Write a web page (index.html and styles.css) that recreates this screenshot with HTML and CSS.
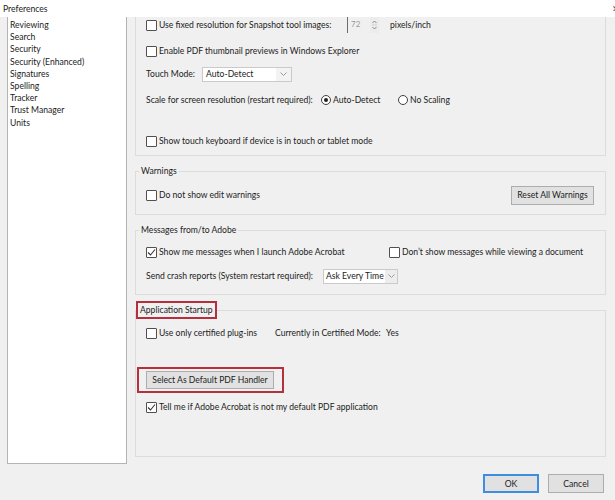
FILE: index.html
```html
<!DOCTYPE html>
<html lang="en">

<head>
    <meta charset="UTF-8">
    <meta name="viewport" content="width=device-width, initial-scale=1.0">
    <title>Preferences</title>

    <link rel="stylesheet" href="styles.css">
</head>

<body>
    <header class="titlebar">
        <span>Preferences</span>
        <span class="close">✕</span>
    </header>

    <div class="main">
        <ul class="categories">
            <li>Reviewing</li>
            <li>Search</li>
            <li>Security</li>
            <li>Security (Enhanced)</li>
            <li>Signatures</li>
            <li>Spelling</li>
            <li>Tracker</li>
            <li>Trust Manager</li>
            <li>Units</li>
        </ul>

        <div class="panel">
            <!-- top of this group is scrolled out of view -->
            <div class="group group-cut">
                <div class="row">
                    <label class="check w-snapshot"><span class="box"></span>Use fixed resolution for Snapshot tool images:</label>
                    <span class="spin">
                        <span class="spin-value">72</span>
                        <span class="spin-arrows">
                            <svg width="7" height="14" viewBox="0 0 7 14">
                                <path d="M1.5 5 L3.5 3 L5.5 5" fill="none" stroke="#8a8a8a" stroke-width="1" />
                                <path d="M1.5 9 L3.5 11 L5.5 9" fill="none" stroke="#8a8a8a" stroke-width="1" />
                                <line x1="1" y1="7" x2="6" y2="7" stroke="#d0d0d0" />
                            </svg>
                        </span>
                    </span>
                    <span class="unit">pixels/inch</span>
                </div>

                <div class="row gap-10">
                    <label class="check"><span class="box"></span>Enable PDF thumbnail previews in Windows Explorer</label>
                </div>

                <div class="row gap-7">
                    <span class="w-touch">Touch Mode:</span>
                    <span class="select select-touch">
                        <span class="select-value">Auto-Detect</span>
                        <span class="select-arrow">
                            <svg width="7" height="4" viewBox="0 0 7 4"><path d="M0.5 0.5 L3.5 3.5 L6.5 0.5" fill="none" stroke="#9a9a9a" /></svg>
                        </span>
                    </span>
                </div>

                <div class="row gap-10">
                    <span class="w-scale">Scale for screen resolution (restart required):</span>
                    <label class="radio w-auto"><span class="dot on"></span>Auto-Detect</label>
                    <label class="radio"><span class="dot"></span>No Scaling</label>
                </div>

                <div class="row gap-25">
                    <label class="check"><span class="box"></span>Show touch keyboard if device is in touch or tablet mode</label>
                </div>
            </div>

            <fieldset class="group group-warnings">
                <legend>Warnings</legend>
                <div class="row row-tall">
                    <label class="check"><span class="box"></span>Do not show edit warnings</label>
                    <button class="btn btn-reset" type="button">Reset All Warnings</button>
                </div>
            </fieldset>

            <fieldset class="group group-messages">
                <legend>Messages from/to Adobe</legend>
                <div class="row">
                    <label class="check w-show"><span class="box checked"><svg width="9" height="9" viewBox="0 0 9 9"><path d="M1 4.5 L3.5 7 L8 1.5" fill="none" stroke="#333" stroke-width="1.1" /></svg></span>Show me messages when I launch Adobe Acrobat</label>
                    <label class="check"><span class="box"></span>Don’t show messages while viewing a document</label>
                </div>

                <div class="row gap-8">
                    <span class="w-crash">Send crash reports (System restart required):</span>
                    <span class="select select-crash">
                        <span class="select-value">Ask Every Time</span>
                        <span class="select-arrow">
                            <svg width="7" height="4" viewBox="0 0 7 4"><path d="M0.5 0.5 L3.5 3.5 L6.5 0.5" fill="none" stroke="#9a9a9a" /></svg>
                        </span>
                    </span>
                </div>
            </fieldset>

            <fieldset class="group group-startup">
                <legend class="marked">Application Startup</legend>
                <div class="row">
                    <label class="check w-plugins"><span class="box"></span>Use only certified plug-ins</label>
                    <span class="w-mode">Currently in Certified Mode:</span>
                    <span>Yes</span>
                </div>

                <div class="row-marked gap-26">
                    <button class="btn btn-handler" type="button">Select As Default PDF Handler</button>
                </div>

                <div class="row gap-6">
                    <label class="check"><span class="box checked"><svg width="9" height="9" viewBox="0 0 9 9"><path d="M1 4.5 L3.5 7 L8 1.5" fill="none" stroke="#333" stroke-width="1.1" /></svg></span>Tell me if Adobe Acrobat is not my default PDF application</label>
                </div>
            </fieldset>
        </div>
    </div>

    <footer class="footer">
        <button class="btn btn-ok" type="button">OK</button>
        <button class="btn btn-cancel" type="button">Cancel</button>
    </footer>
</body>

</html>
```

FILE: styles.css
```css
:root {
    --background: #f0f0f0;
    --text: #222;
    --line: #dcdcdc;
    --mark: #b3303c;
}

* {
    margin: 0;
    padding: 0;
    box-sizing: border-box;
}

body {
    width: 615px;
    height: 500px;
    overflow: hidden;
    background-color: var(--background);
    color: var(--text);
    font-family: "Lato", "Noto Sans", sans-serif;
    font-size: 8.6px;
    line-height: 14px;
}

.titlebar {
    height: 17px;
    background-color: white;
    display: flex;
    justify-content: space-between;
    align-items: center;
    padding-left: 3px;
    overflow: hidden;
}

.titlebar .close {
    font-size: 9px;
    margin-right: -5px;
    color: #555;
}

.main {
    height: 447px;
    display: flex;
    padding-left: 7px;
}

.categories {
    width: 120px;
    height: 447px;
    list-style: none;
    background-color: white;
    border: 1px solid #b4b4b4;
    border-top: none;
    padding: 2px 0 0 2px;
}

.categories li {
    line-height: 12.2px;
}

.panel {
    width: 471px;
    margin-left: 8px;
    display: flex;
    flex-direction: column;
}

.group {
    border: 1px solid var(--line);
    min-width: 0;
    padding: 0 10px;
}

.group legend {
    margin-left: -7px;
    padding: 0 2px;
    line-height: 14px;
}

.group legend.marked {
    margin-left: -10px;
    border: 2px solid var(--mark);
    padding: 0 2px;
}

.group-cut {
    border-top: none;
    padding-bottom: 6px;
}

.group-warnings {
    margin-top: 8px;
    padding-top: 7px;
    padding-bottom: 9px;
}

.group-messages {
    margin-top: 8px;
    padding-top: 7px;
    padding-bottom: 10px;
}

.group-startup {
    margin-top: 6px;
    padding-top: 6px;
    padding-bottom: 41px;
}

.row {
    height: 16px;
    display: flex;
    align-items: center;
    white-space: nowrap;
}

.row-tall {
    height: 20px;
    justify-content: space-between;
    padding-right: 1px;
}

.gap-6 { margin-top: 6px; }
.gap-7 { margin-top: 7px; }
.gap-8 { margin-top: 8px; }
.gap-10 { margin-top: 10px; }
.gap-25 { margin-top: 25px; }
.gap-26 { margin-top: 26px; }

.check,
.radio {
    display: flex;
    align-items: center;
}

.box {
    width: 11px;
    height: 11px;
    margin-right: 2px;
    border: 1px solid #505050;
    border-radius: 1px;
    background-color: white;
    display: flex;
    align-items: center;
    justify-content: center;
    flex-shrink: 0;
}

.dot {
    width: 10px;
    height: 10px;
    margin-right: 2px;
    border: 1px solid #404040;
    border-radius: 50%;
    background-color: white;
    display: flex;
    align-items: center;
    justify-content: center;
    flex-shrink: 0;
}

.dot.on::after {
    content: "";
    width: 4px;
    height: 4px;
    border-radius: 50%;
    background-color: #222;
}

/* fixed columns so controls line up as in the dialog */
.w-snapshot { width: 201px; }
.w-touch { width: 56px; }
.w-scale { width: 175px; }
.w-auto { width: 77px; }
.w-show { width: 243px; }
.w-crash { width: 177px; }
.w-plugins { width: 129px; }
.w-mode { width: 111px; }

.spin {
    height: 16px;
    display: flex;
    align-items: stretch;
}

.spin-value {
    width: 23px;
    border-left: 1px solid #6e6e6e;
    padding-left: 3px;
    color: #9a9a9a;
    font-size: 8px;
    line-height: 14px;
}

.spin-arrows {
    width: 9px;
    display: flex;
    align-items: center;
    justify-content: center;
    background-color: #ececec;
}

.unit {
    margin-left: 11px;
}

.select {
    height: 15px;
    display: flex;
    border: 1px solid #cacaca;
    background-color: white;
}

.select-touch { width: 90px; }
.select-crash { width: 75px; }

.select-value {
    flex: 1;
    padding-left: 3px;
    line-height: 13px;
    overflow: hidden;
    white-space: nowrap;
}

.select-arrow {
    width: 15px;
    display: flex;
    align-items: center;
    justify-content: center;
    background-color: #f3f3f3;
}

.select-crash .select-value {
    padding-left: 2px;
}

.select-crash .select-arrow {
    width: 12px;
    background-color: #ededed;
}

.row-marked {
    width: 147px;
    height: 26px;
    border: 2px solid var(--mark);
    padding: 2px 8px 2px 7px;
    margin-left: -9px;
}

.btn {
    font-family: inherit;
    font-size: 8.6px;
    color: var(--text);
    background-color: #e1e1e1;
    border: 1px solid #adadad;
    height: 19px;
    padding: 0;
    white-space: nowrap;
}

.btn-reset {
    width: 83px;
}

.btn-handler {
    width: 128px;
    height: 18px;
}

.footer {
    height: 36px;
    display: flex;
    justify-content: flex-end;
    gap: 9px;
    padding: 10px 11px 0 0;
}

.btn-ok,
.btn-cancel {
    width: 56px;
}

.btn-ok {
    border: 2px solid #3b8ee0;
}
```
